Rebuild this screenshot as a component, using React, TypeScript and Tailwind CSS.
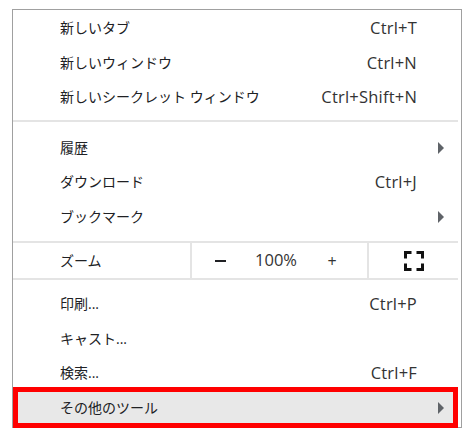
import type { ReactNode } from "react"

const font = { fontFamily: '"Open Sans", "Noto Sans CJK JP", sans-serif' }

function Arrow() {
  return (
    <svg width="6" height="12" viewBox="0 0 6 12" className="block">
      <path d="M0 0 L6 6 L0 12 Z" fill="#5f6368" />
    </svg>
  )
}

function Row({
  label,
  shortcut,
  arrow,
  active,
}: {
  label: string
  shortcut?: string
  arrow?: boolean
  active?: boolean
}) {
  return (
    <div
      className={`flex items-center h-[34.5px] pl-[47px] mr-[3px] ${active ? "bg-[#e8e8e8]" : ""}`}
    >
      <span className="flex-1 text-[14px] leading-none text-[#202124]">{label}</span>
      {shortcut && (
        <span className="text-[16.5px] leading-none tracking-[0.2px] text-[#333]">{shortcut}</span>
      )}
      <div className="w-[41px] pl-[21px] flex items-center">{arrow && <Arrow />}</div>
    </div>
  )
}

function Separator({ className }: { className: string }) {
  return <div className={`h-[2px] bg-[#e4e4e4] mr-[3px] ${className}`} />
}

function Cell({ children, className }: { children: ReactNode; className: string }) {
  return <div className={`flex items-center justify-center h-full ${className}`}>{children}</div>
}

function FullscreenIcon() {
  return (
    <svg width="20" height="20" viewBox="0 0 20 20" className="block">
      <path
        d="M1.5 7.5 V1.5 H7.5 M12.5 1.5 H18.5 V7.5 M18.5 12.5 V18.5 H12.5 M7.5 18.5 H1.5 V12.5"
        fill="none"
        stroke="#111"
        strokeWidth="3"
      />
    </svg>
  )
}

export default function App() {
  return (
    <div className="relative w-[470px] h-[437px] bg-white overflow-hidden" style={font}>
      <div className="ml-[12px] mt-[9px] w-[450px] border border-[#a0a0a0] bg-white pt-[1px] pb-[2px]">
        <Row label="新しいタブ" shortcut="Ctrl+T" />
        <Row label="新しいウィンドウ" shortcut="Ctrl+N" />
        <Row label="新しいシークレット ウィンドウ" shortcut="Ctrl+Shift+N" />
        <Separator className="mt-[5px] mb-[9px]" />
        <Row label="履歴" arrow />
        <Row label="ダウンロード" shortcut="Ctrl+J" />
        <Row label="ブックマーク" arrow />
        <Separator className="mt-[7px]" />

        {/* zoom */}
        <div className="flex items-center h-[35px] mr-[3px]">
          <div className="w-[177px] pl-[47px] text-[14px] leading-none text-[#202124]">ズーム</div>
          <div className="w-[2px] h-full bg-[#e4e4e4]" />
          <div className="flex h-full w-[175px]">
            <Cell className="w-[56px]">
              <div className="w-[11px] h-[2px] bg-[#202124]" />
            </Cell>
            <Cell className="w-[56px] text-[16.5px] leading-none text-[#333]">100%</Cell>
            <Cell className="w-[56px] text-[16px] leading-none text-[#333]">+</Cell>
          </div>
          <div className="w-[2px] h-full bg-[#e4e4e4]" />
          <Cell className="flex-1">
            <FullscreenIcon />
          </Cell>
        </div>

        <Separator className="mb-[7px]" />
        <Row label="印刷..." shortcut="Ctrl+P" />
        <Row label="キャスト..." />
        <Row label="検索..." shortcut="Ctrl+F" />
        <Row label="その他のツール" arrow active />
      </div>

      {/* red highlight box */}
      <div className="absolute left-[13px] top-[387px] w-[445px] h-[41px] border-[5px] border-[#ff0000]" />
    </div>
  )
}
